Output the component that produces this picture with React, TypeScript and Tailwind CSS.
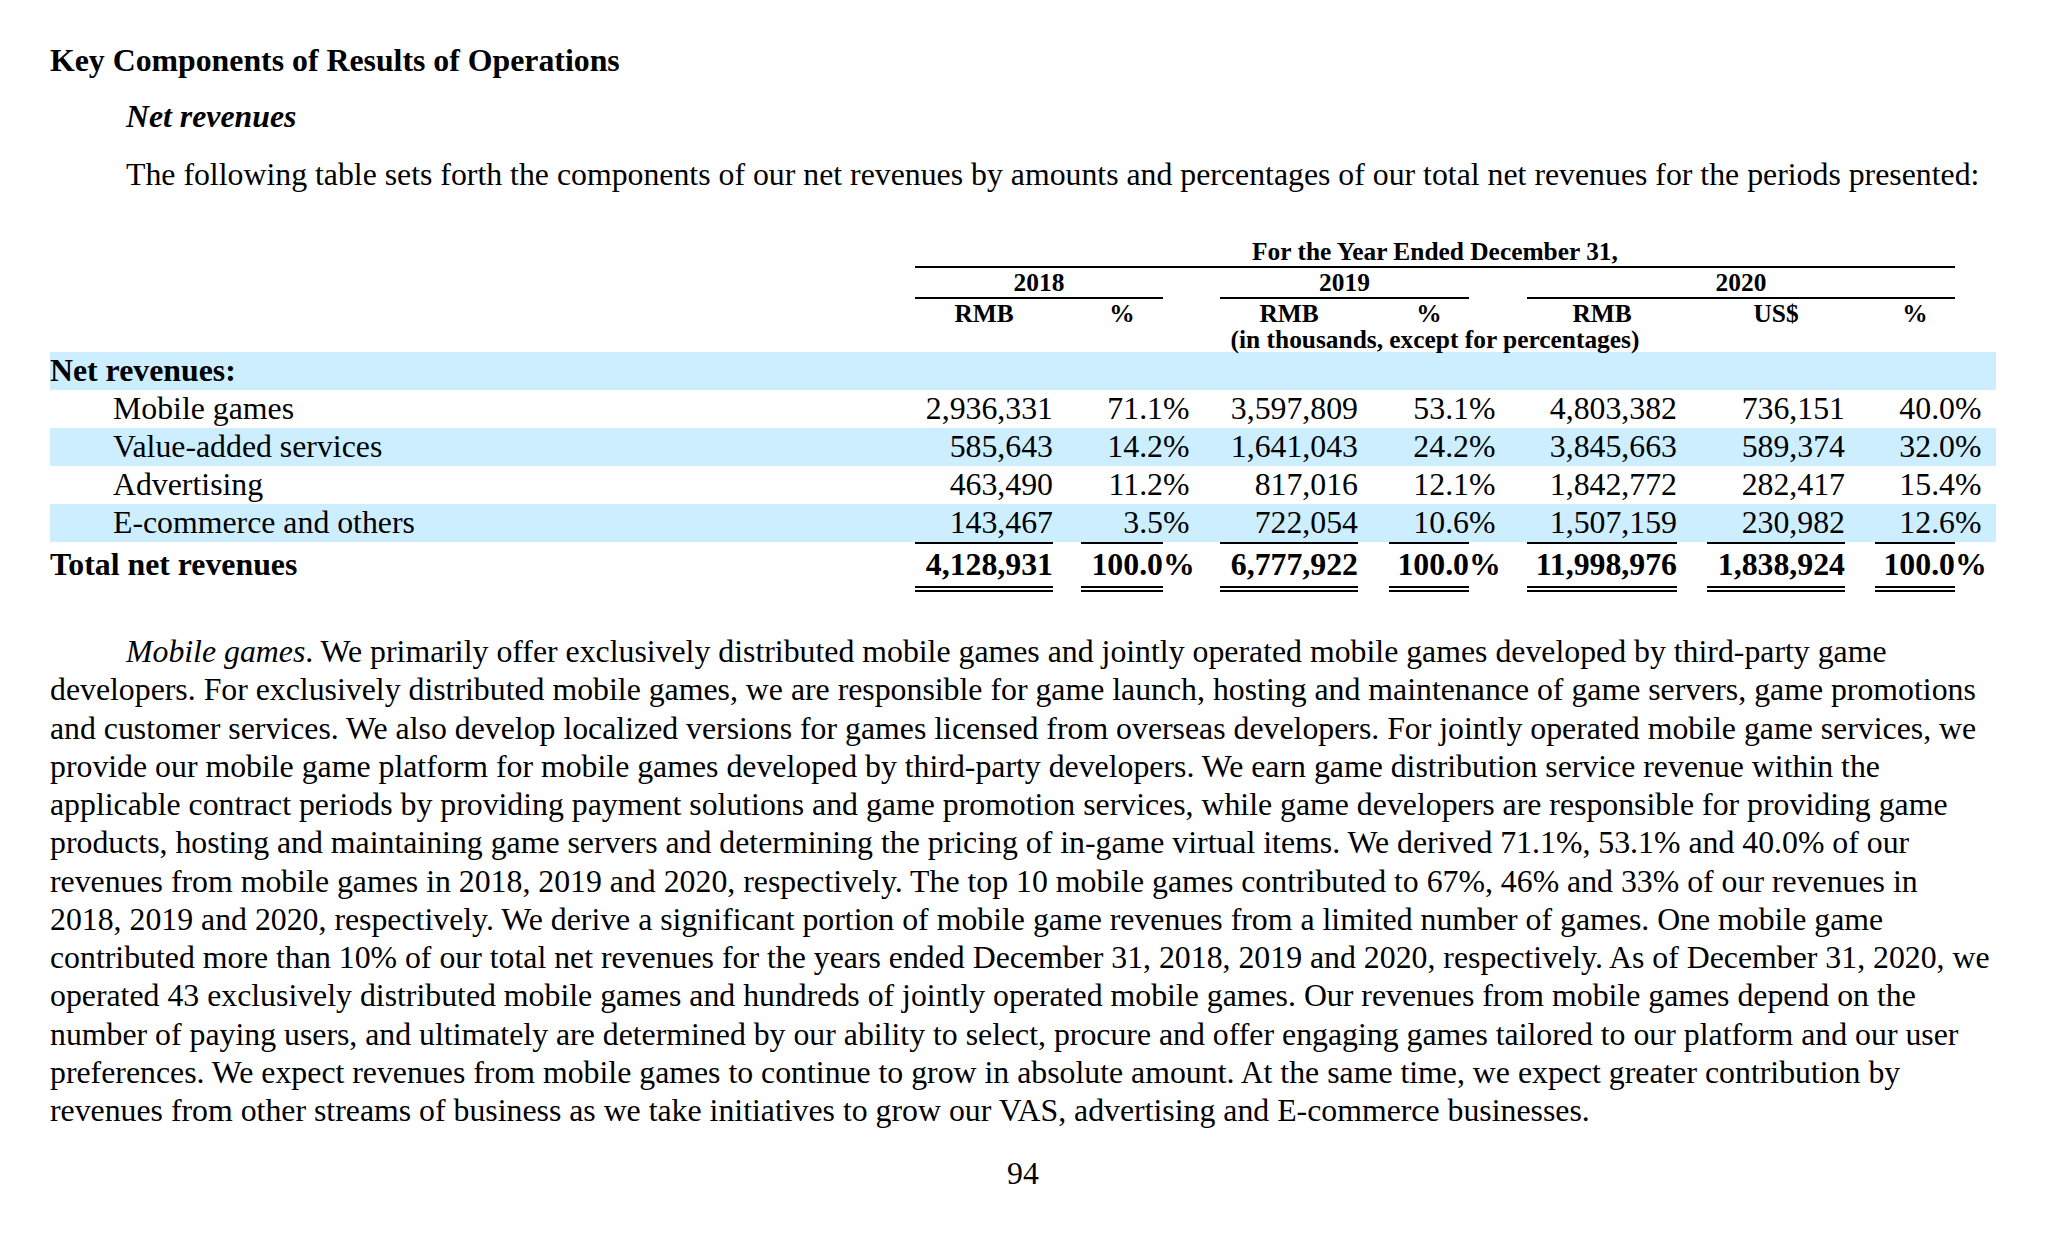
const cols =
  'grid grid-cols-[865px_138px_28px_82px_57px_138px_31px_80px_58px_150px_30px_138px_30px_80px_41px]'

const rows = [
  { label: 'Mobile games', v: ['2,936,331', '71.1', '3,597,809', '53.1', '4,803,382', '736,151', '40.0'], blue: false },
  { label: 'Value-added services', v: ['585,643', '14.2', '1,641,043', '24.2', '3,845,663', '589,374', '32.0'], blue: true },
  { label: 'Advertising', v: ['463,490', '11.2', '817,016', '12.1', '1,842,772', '282,417', '15.4'], blue: false },
  { label: 'E-commerce and others', v: ['143,467', '3.5', '722,054', '10.6', '1,507,159', '230,982', '12.6'], blue: true },
]

const total = ['4,128,931', '100.0', '6,777,922', '100.0', '11,998,976', '1,838,924', '100.0']

// which value columns are percentages (the % sign sits in the next gap cell)
const isPct = [false, true, false, true, false, false, true]

const lines: React.ReactNode[] = [
  <>
    <span className="pl-[76px] italic">Mobile games</span>. We primarily offer exclusively distributed mobile games and
    jointly operated mobile games developed by third-party game
  </>,
  'developers. For exclusively distributed mobile games, we are responsible for game launch, hosting and maintenance of game servers, game promotions',
  'and customer services. We also develop localized versions for games licensed from overseas developers. For jointly operated mobile game services, we',
  'provide our mobile game platform for mobile games developed by third-party developers. We earn game distribution service revenue within the',
  'applicable contract periods by providing payment solutions and game promotion services, while game developers are responsible for providing game',
  'products, hosting and maintaining game servers and determining the pricing of in-game virtual items. We derived 71.1%, 53.1% and 40.0% of our',
  'revenues from mobile games in 2018, 2019 and 2020, respectively. The top 10 mobile games contributed to 67%, 46% and 33% of our revenues in',
  '2018, 2019 and 2020, respectively. We derive a significant portion of mobile game revenues from a limited number of games. One mobile game',
  'contributed more than 10% of our total net revenues for the years ended December 31, 2018, 2019 and 2020, respectively. As of December 31, 2020, we',
  'operated 43 exclusively distributed mobile games and hundreds of jointly operated mobile games. Our revenues from mobile games depend on the',
  'number of paying users, and ultimately are determined by our ability to select, procure and offer engaging games tailored to our platform and our user',
  'preferences. We expect revenues from mobile games to continue to grow in absolute amount. At the same time, we expect greater contribution by',
  'revenues from other streams of business as we take initiatives to grow our VAS, advertising and E-commerce businesses.',
]

function ValueCells({ v, bold }: { v: string[]; bold?: boolean }) {
  const cells: React.ReactNode[] = []
  v.forEach((val, i) => {
    const edge = bold ? 'border-t-2 border-black' : ''
    cells.push(
      <div key={`v${i}`} className={edge}>
        <div
          className={
            bold
              ? 'flex h-[48px] items-center justify-end border-b-[6px] border-double border-black'
              : 'flex h-[38px] items-center justify-end'
          }
        >
          {val}
        </div>
      </div>
    )
    cells.push(
      <div key={`g${i}`} className={bold ? 'border-t-2 border-transparent' : ''}>
        <div className={bold ? 'flex h-[48px] items-center border-b-[6px] border-transparent' : 'flex h-[38px] items-center'}>
          {isPct[i] ? '%' : ''}
        </div>
      </div>
    )
  })
  return <>{cells}</>
}

export default function App() {
  return (
    <div className="min-h-[1245px] w-[2048px] bg-white text-black font-['Liberation_Serif','Times_New_Roman',serif] text-[31.8px]">
      <div className="pl-[50px] pr-[52px] pt-[42px]">
        <h2 className="font-bold leading-[38px]">Key Components of Results of Operations</h2>
        <h3 className="mt-[18px] pl-[76px] font-bold italic leading-[38px]">Net revenues</h3>
        <p className="mt-[20px] pl-[76px] leading-[38px]">
          The following table sets forth the components of our net revenues by amounts and percentages of our total net
          revenues for the periods presented:
        </p>

        {/* Net revenues table */}
        <div className="mt-[43px]">
          <div className="text-[25.4px] font-bold leading-[29px]">
            <div className={cols}>
              <div />
              <div className="col-span-13 h-[31px] whitespace-nowrap border-b-2 border-black text-center">
                For the Year Ended December 31,
              </div>
              <div />
            </div>
            <div className={cols}>
              <div />
              <div className="col-span-3 h-[31px] border-b-2 border-black text-center">2018</div>
              <div />
              <div className="col-span-3 h-[31px] border-b-2 border-black text-center">2019</div>
              <div />
              <div className="col-span-5 h-[31px] border-b-2 border-black text-center">2020</div>
              <div />
            </div>
            <div className={cols}>
              <div />
              <div className="h-[29px] text-center">RMB</div>
              <div />
              <div className="h-[29px] text-center">%</div>
              <div />
              <div className="h-[29px] text-center">RMB</div>
              <div />
              <div className="h-[29px] text-center">%</div>
              <div />
              <div className="h-[29px] text-center">RMB</div>
              <div />
              <div className="h-[29px] text-center">US$</div>
              <div />
              <div className="h-[29px] text-center">%</div>
              <div />
            </div>
            <div className={cols}>
              <div />
              <div className="col-span-13 h-[24px] whitespace-nowrap text-center leading-[22px]">
                (in thousands, except for percentages)
              </div>
              <div />
            </div>
          </div>

          <div className={`${cols} bg-[#cceeff]`}>
            <div className="flex h-[38px] items-center font-bold">Net revenues:</div>
          </div>
          {rows.map((r) => (
            <div key={r.label} className={`${cols} ${r.blue ? 'bg-[#cceeff]' : ''}`}>
              <div className="flex h-[38px] items-center whitespace-nowrap pl-[63px]">{r.label}</div>
              <ValueCells v={r.v} />
            </div>
          ))}
          <div className={`${cols} font-bold`}>
            <div className="border-t-2 border-transparent">
              <div className="flex h-[48px] items-center border-b-[6px] border-transparent">Total net revenues</div>
            </div>
            <ValueCells v={total} bold />
          </div>
        </div>

        {/* Mobile games paragraph */}
        <div className="mt-[41px] leading-[38.25px]">
          {lines.map((l, i) => (
            <div key={i} className="whitespace-nowrap">
              {l}
            </div>
          ))}
        </div>

        <div className="mt-[25px] text-center leading-[38px]">94</div>
      </div>
    </div>
  )
}
